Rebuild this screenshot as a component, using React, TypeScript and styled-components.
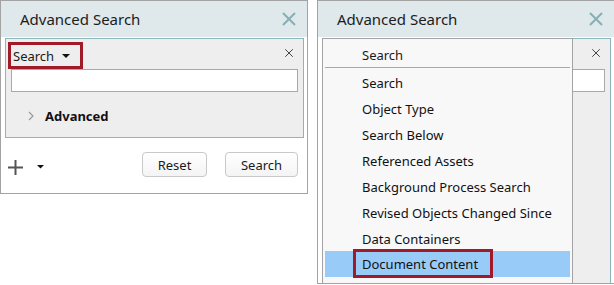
import styled, { createGlobalStyle } from 'styled-components';

const GlobalStyle = createGlobalStyle`
	html, body {
		margin: 0;
		padding: 0;
		background: #ffffff;
		overflow: hidden;
	}
	body {
		font-family: "Noto Sans", "Open Sans", sans-serif;
		color: #1a1a1a;
	}
	* {
		box-sizing: border-box;
	}
`;

const menuItems = [
	'Search',
	'Object Type',
	'Search Below',
	'Referenced Assets',
	'Background Process Search',
	'Revised Objects Changed Since',
	'Data Containers',
	'Document Content',
];

const CloseIcon = ({ size, color, weight }: { size: number; color: string; weight: number }) => (
	<svg width={size} height={size} viewBox="0 0 16 16">
		<path d="M2 2 L14 14 M14 2 L2 14" stroke={color} strokeWidth={weight} fill="none" />
	</svg>
);

const Caret = ({ w }: { w: number }) => (
	<svg width={w} height={w / 2} viewBox="0 0 8 4">
		<path d="M0 0 L8 0 L4 4 Z" fill="#111" />
	</svg>
);

// covered: the box sits under the open menu, so its labels are not seen
const SearchBox = ({ marked, covered }: { marked?: boolean; covered?: boolean }) => (
	<InnerBox>
		<TypeRow>
			<TypeButton marked={marked} covered={covered}>
				Search
				<Caret w={8} />
			</TypeButton>
			<SmallClose>
				<CloseIcon size={10} color="#444" weight={1.6} />
			</SmallClose>
		</TypeRow>
		<TextInput />
		<AdvancedRow covered={covered}>
			<svg width="6" height="10" viewBox="0 0 6 10">
				<path d="M1 1 L5 5 L1 9" stroke="#9a9a9a" strokeWidth="1.2" fill="none" />
			</svg>
			<AdvancedLabel>Advanced</AdvancedLabel>
		</AdvancedRow>
	</InnerBox>
);

const App = () => {
	return (
		<>
			<GlobalStyle />
			<Page>
				<Panel panelWidth={308} panelHeight={194}>
					<Header>
						<Title>Advanced Search</Title>
						<CloseIcon size={16} color="#86afb6" weight={2} />
					</Header>
					<Body>
						<SearchBox marked />
					</Body>
					<Footer>
						<AddGroup>
							<svg width="15" height="15" viewBox="0 0 15 15">
								<path d="M7.5 0 V15 M0 7.5 H15" stroke="#555" strokeWidth="2" />
							</svg>
							<Caret w={7} />
						</AddGroup>
						<ButtonGroup>
							<Button btnWidth={65}>Reset</Button>
							<Button btnWidth={73}>Search</Button>
						</ButtonGroup>
					</Footer>
				</Panel>

				<Panel panelWidth={298} panelHeight={284}>
					<Header>
						<Title>Advanced Search</Title>
						<CloseIcon size={16} color="#86afb6" weight={2} />
					</Header>
					<Body grow>
						<SearchBox covered />
					</Body>
					<Menu>
						<MenuHeading>Search</MenuHeading>
						<MenuList>
							{menuItems.map((item, i) => (
								<MenuItem key={item} active={i === menuItems.length - 1}>
									<MenuText marked={i === menuItems.length - 1}>{item}</MenuText>
								</MenuItem>
							))}
						</MenuList>
					</Menu>
				</Panel>
			</Page>
		</>
	);
};

const Page = styled.div`
	display: flex;
	align-items: flex-start;
	gap: 9px;
	width: 640px;
`;

const Panel = styled.div<{ panelWidth: number; panelHeight: number }>`
	position: relative;
	display: flex;
	flex-direction: column;
	flex-shrink: 0;
	width: ${props => props.panelWidth}px;
	height: ${props => props.panelHeight}px;
	border: 1px solid #a3a3a3;
	background: #ffffff;
	overflow: hidden;
`;

const Header = styled.div`
	display: flex;
	align-items: center;
	justify-content: space-between;
	height: 36px;
	padding: 0 10px 0 19px;
	background: #dfe8eb;
	flex-shrink: 0;
`;

const Title = styled.span`
	font-size: 15px;
	color: #1c1c1c;
`;

const Body = styled.div<{ grow?: boolean }>`
	display: flex;
	flex-direction: column;
	padding: 1px 3px 0 4px;
	${({ grow }) => grow && `
		flex: 1;
		& > div { flex: 1; border-bottom: none; }
	`}
`;

const InnerBox = styled.div`
	display: flex;
	flex-direction: column;
	height: 100px;
	border: 1px solid #8db5bc;
	background: #eeeeee;
	padding: 3px 0 0 2px;
`;

const TypeRow = styled.div`
	display: flex;
	align-items: flex-start;
	justify-content: space-between;
`;

const TypeButton = styled.div<{ marked?: boolean; covered?: boolean }>`
	display: flex;
	align-items: center;
	gap: 8px;
	width: 75px;
	height: 27px;
	padding: 0 0 0 2px;
	font-size: 13px;
	border: 3px solid ${({ marked }) => (marked ? '#a01b27' : 'transparent')};
	visibility: ${({ covered }) => (covered ? 'hidden' : 'visible')};
`;

const SmallClose = styled.div`
	display: flex;
	padding: 6px 9px 0 0;
`;

const TextInput = styled.div`
	height: 23px;
	margin: 0 5px 0 3px;
	border: 1px solid #a9a9a9;
	background: #ffffff;
`;

const AdvancedRow = styled.div<{ covered?: boolean }>`
	display: flex;
	align-items: center;
	gap: 11px;
	height: 24px;
	margin-top: 12px;
	padding-left: 20px;
	visibility: ${({ covered }) => (covered ? 'hidden' : 'visible')};
`;

const AdvancedLabel = styled.span`
	font-size: 13px;
	font-weight: bold;
	color: #111;
`;

const Footer = styled.div`
	display: flex;
	align-items: center;
	justify-content: space-between;
	flex: 1;
	padding: 0 9px 2px 7px;
`;

const AddGroup = styled.div`
	display: flex;
	align-items: center;
	gap: 14px;
	padding-top: 5px;
`;

const ButtonGroup = styled.div`
	display: flex;
	gap: 18px;
`;

const Button = styled.div<{ btnWidth: number }>`
	display: flex;
	align-items: center;
	justify-content: center;
	width: ${props => props.btnWidth}px;
	height: 25px;
	font-size: 13px;
	color: #1a1a1a;
	border: 1px solid #c9c9c9;
	border-radius: 4px;
	background: linear-gradient(#ffffff, #f4f4f4);
`;

const Menu = styled.div`
	position: absolute;
	left: 4px;
	top: 37px;
	width: 251px;
	height: 247px;
	display: flex;
	flex-direction: column;
	padding: 0 2px 0 2px;
	border: 1px solid #a3a3a3;
	background: #f8f8f8;
`;

const MenuHeading = styled.div`
	display: flex;
	align-items: center;
	height: 29px;
	padding: 3px 0 0 37px;
	font-size: 13px;
	border-bottom: 1px solid #a8a8a8;
`;

const MenuList = styled.div`
	display: flex;
	flex-direction: column;
	padding-top: 1px;
`;

const MenuItem = styled.div<{ active?: boolean }>`
	display: flex;
	align-items: center;
	height: 26px;
	padding: 2px 0 0 37px;
	background: ${({ active }) => (active ? '#99cbf8' : 'transparent')};
`;

const MenuText = styled.span<{ marked?: boolean }>`
	font-size: 13px;
	line-height: 18px;
	color: #111;
	${({ marked }) => marked && `
		display: flex;
		align-items: center;
		height: 29px;
		margin: -4px 0 -1px -9px;
		padding: 0 12px 0 6px;
		border: 3px solid #a01b27;
	`}
`;

export default App;
